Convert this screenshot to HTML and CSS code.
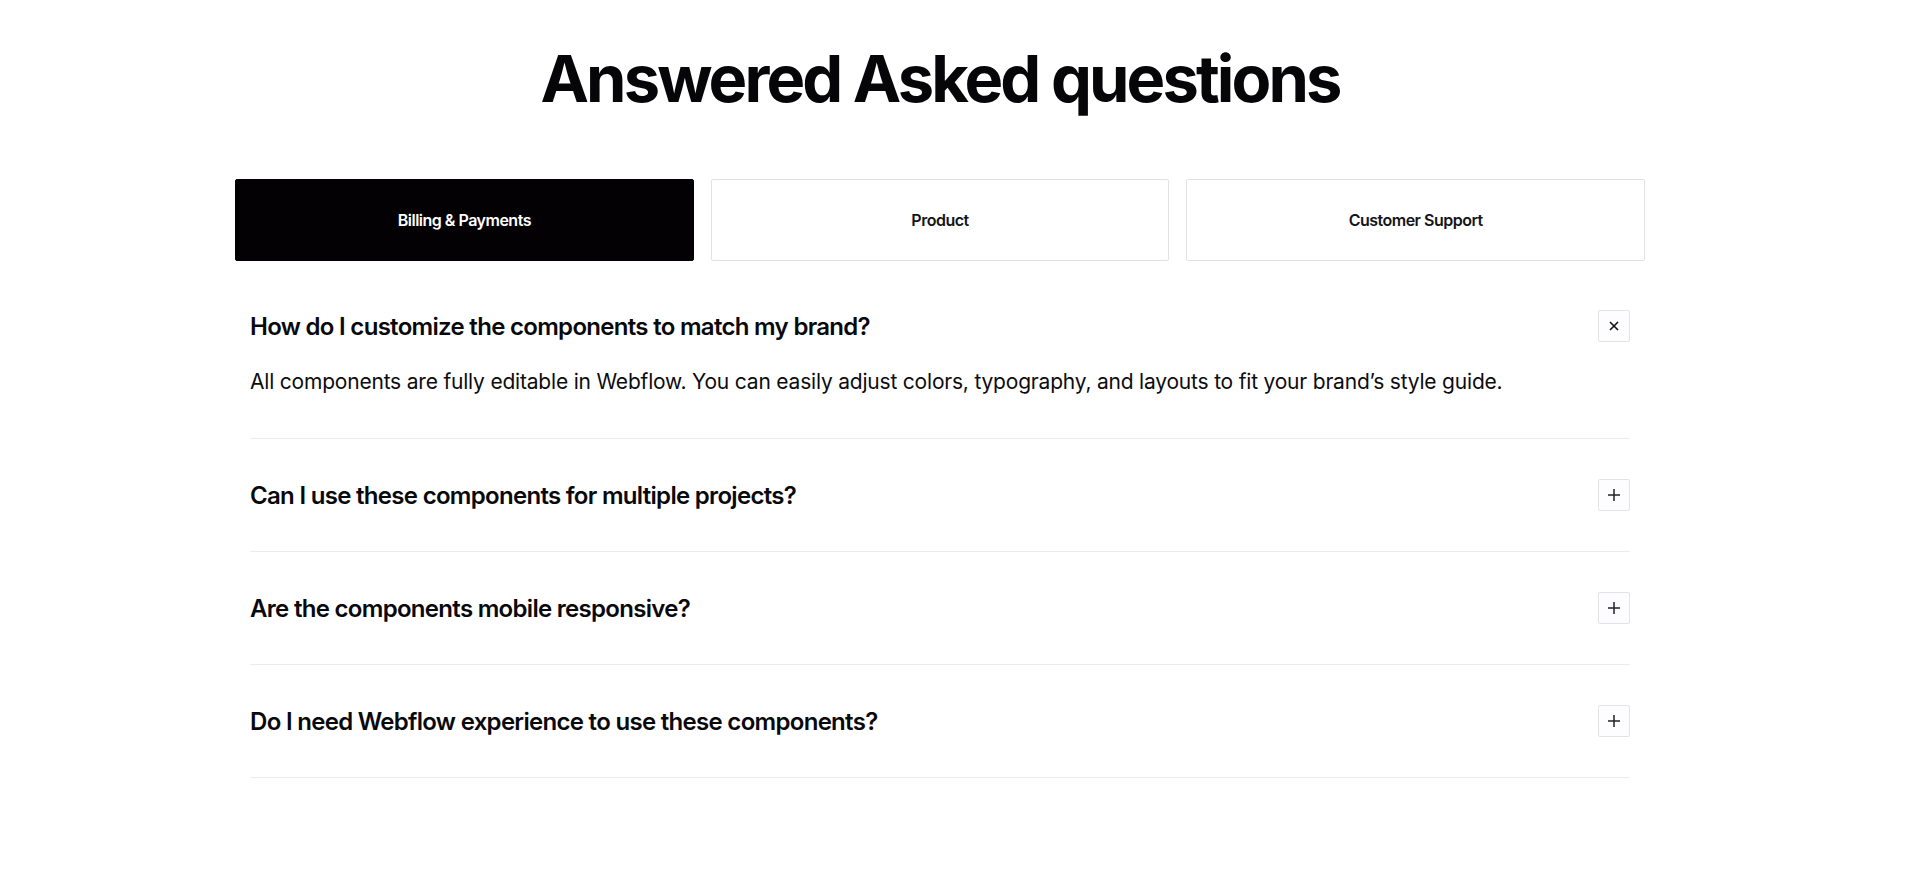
FILE: index.html
```html
<!DOCTYPE html>
<html lang="en">
<head>
<meta charset="utf-8">
<title>FAQ</title>
<link rel="stylesheet" href="styles.css">
</head>
<body>
<div class="page">
  <section class="faq">
    <h1 class="faq-title">Answered Asked questions</h1>
    <div class="tabs">
      <button class="tab tab-active">Billing &amp; Payments</button>
      <button class="tab">Product</button>
      <button class="tab">Customer Support</button>
    </div>
    <div class="faq-list">
      <div class="faq-item faq-open">
        <div class="faq-head">
          <h3 class="faq-q">How do I customize the components to match my brand?</h3>
          <span class="faq-toggle">
            <svg width="12" height="12" viewBox="0 0 12 12"><path d="M2 2 L10 10 M10 2 L2 10" stroke="#111" stroke-width="1.6" fill="none"/></svg>
          </span>
        </div>
        <p class="faq-a">All components are fully editable in Webflow. You can easily adjust colors, typography, and layouts to fit your brand’s style guide.</p>
      </div>
      <div class="faq-item">
        <div class="faq-head">
          <h3 class="faq-q">Can I use these components for multiple projects?</h3>
          <span class="faq-toggle">
            <svg width="14" height="14" viewBox="0 0 14 14"><path d="M7 1 V13 M1 7 H13" stroke="#222" stroke-width="1.5" fill="none"/></svg>
          </span>
        </div>
      </div>
      <div class="faq-item">
        <div class="faq-head">
          <h3 class="faq-q">Are the components mobile responsive?</h3>
          <span class="faq-toggle">
            <svg width="14" height="14" viewBox="0 0 14 14"><path d="M7 1 V13 M1 7 H13" stroke="#222" stroke-width="1.5" fill="none"/></svg>
          </span>
        </div>
      </div>
      <div class="faq-item">
        <div class="faq-head">
          <h3 class="faq-q">Do I need Webflow experience to use these components?</h3>
          <span class="faq-toggle">
            <svg width="14" height="14" viewBox="0 0 14 14"><path d="M7 1 V13 M1 7 H13" stroke="#222" stroke-width="1.5" fill="none"/></svg>
          </span>
        </div>
      </div>
    </div>
  </section>
</div>
</body>
</html>
```
FILE: styles.css
```css
* { box-sizing: border-box; }
html, body {
  margin: 0;
  padding: 0;
  background: #ffffff;
}
body {
  font-family: Inter, "Noto Sans", "Liberation Sans", sans-serif;
  color: #0a0a0c;
}
.page {
  padding: 0 40px 0 0;
}
.faq {
  width: 1410px;
  margin: 0 auto;
  padding-top: 39px;
}
.faq-title {
  margin: 0;
  text-align: center;
  font-size: 65px;
  line-height: 79px;
  font-weight: 700;
  letter-spacing: -2.9px;
  color: #060608;
}
.tabs {
  display: grid;
  grid-template-columns: repeat(3, 1fr);
  gap: 17px;
  margin-top: 61px;
}
.tab {
  height: 82px;
  border: 1px solid #e2e1e4;
  border-radius: 2px;
  background: #ffffff;
  font-family: inherit;
  font-size: 16px;
  font-weight: 600;
  letter-spacing: -0.5px;
  color: #141416;
  cursor: pointer;
}
.tab-active {
  background: #030104;
  border-color: #030104;
  color: #ffffff;
}
.faq-list {
  margin: 9px 15px 0;
}
.faq-item {
  padding: 40px 0 40px;
  border-bottom: 1px solid #ececee;
}
.faq-open {
  padding-bottom: 41px;
}
.faq-head {
  display: flex;
  align-items: center;
  justify-content: space-between;
  height: 32px;
}
.faq-q {
  margin: 0;
  font-size: 24px;
  font-weight: 600;
  letter-spacing: -0.7px;
  color: #09090b;
}
.faq-toggle {
  width: 32px;
  height: 32px;
  border: 1px solid #e3e2e6;
  border-radius: 2px;
  background: #fdfcfe;
  display: flex;
  align-items: center;
  justify-content: center;
}
.faq-a {
  margin: 25px 0 0;
  font-size: 21px;
  line-height: 30px;
  font-weight: 400;
  letter-spacing: -0.2px;
  color: #0c0c0e;
}
```
